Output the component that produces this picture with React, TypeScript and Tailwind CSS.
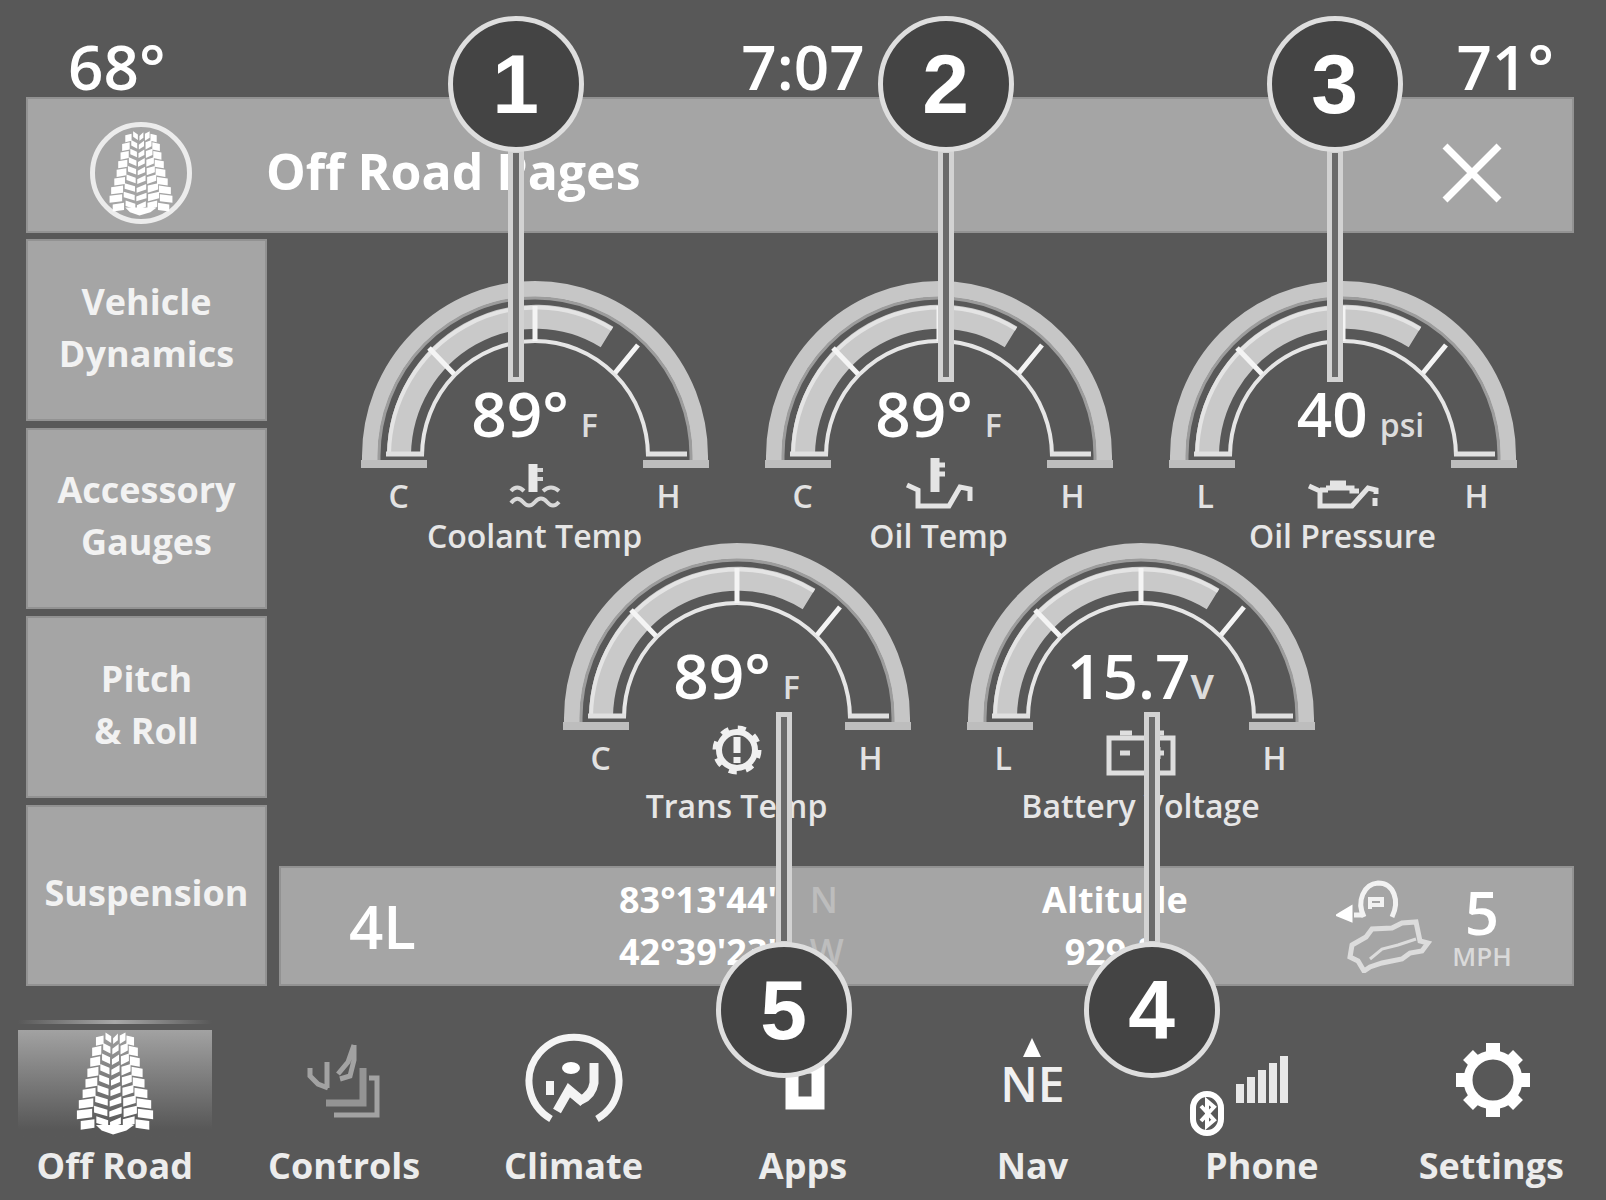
import type { ReactNode } from 'react';

type GaugeProps = {
  name: string;
  low: string;
  value: string;
  unit: string;
  icon: ReactNode;
  valueClass?: string;
  unitClass?: string;
  children?: ReactNode;
};

// Rows of tread blocks, widening towards the bottom
const treadRows = [
  { y: 0, w: 40 },
  { y: 11, w: 48 },
  { y: 22, w: 52 },
  { y: 33, w: 58 },
  { y: 44, w: 62 },
  { y: 55, w: 68 },
  { y: 66, w: 76 },
  { y: 77, w: 80 },
  { y: 88, w: 72 },
];

const TreadIcon = ({ className }: { className: string }) => (
  <svg viewBox="0 0 84 108" className={className} fill="#fff" aria-hidden="true">
    {treadRows.map(({ y, w }) => {
      const left = 42 - w / 2;
      const s = w / 5;
      return (
        <g key={y}>
          <path d={`M${left} ${y + 6}l${s} -2v9l${-s} 2z`} />
          <path d={`M${left + s + 2} ${y + 1}l${s - 2} 4v7l${2 - s} -4z`} />
          <path d={`M${left + 2 * s + 2} ${y + 7}l${s - 3} -5v7l${3 - s} 4z`} />
          <path d={`M${left + 3 * s + 1} ${y + 4}l${s - 2} -3v8l${2 - s} 4z`} />
          <path d={`M${left + 4 * s} ${y + 4}l${s} 2v9l${-s} -2z`} />
        </g>
      );
    })}
    <path d="M22 98l40 0l-8 6l-14 4l-12 -4z" />
  </svg>
);

const Callout = ({ number, className, up }: { number: number; className: string; up?: boolean }) => (
  <div className={`absolute z-10 flex h-[362px] -translate-x-1/2 items-center ${up ? 'flex-col' : 'flex-col-reverse'} ${className}`}>
    <div className="-my-1 w-4 grow border-5 border-[#d2d2d2] bg-[#6a6a6a]" />
    <span className="z-10 flex size-[136px] items-center justify-center rounded-full border-5 border-[#dedede] bg-[#444] font-['Liberation_Sans',sans-serif] text-[84px] leading-none font-bold text-white">
      {number}
    </span>
  </div>
);

const Gauge = ({
  name,
  low,
  value,
  unit,
  icon,
  valueClass = 'gap-3',
  unitClass = 'text-[32px]',
  children,
}: GaugeProps) => (
  <section className="relative h-[262px] w-[348px]" aria-label={name}>
    <svg viewBox="0 0 348 188" className="h-[188px] w-full" fill="none" aria-hidden="true">
      <path d="M9 184V176A165 167 0 0 1 339 176V184" stroke="#c6c6c6" strokeWidth="16" />
      <path d="M18 182V176A156 158 0 0 1 330 176V182" stroke="#9c9c9c" strokeWidth="3" />
      <path d="M38 174A137 140 0 0 1 246 57" stroke="#c9c9c9" strokeWidth="24" />
      <path d="M28 174A147 149 0 0 1 251 49" stroke="#e4e4e4" strokeWidth="4" />
      <path d="M61 176A113 115 0 0 1 287 176" stroke="#e6e6e6" strokeWidth="4" />
      <path d="M174 26V61M68 68L93 94M254 93L277 65" stroke="#f4f4f4" strokeWidth="5" />
      <path d="M25 174H63M285 174H326" stroke="#e0e0e0" strokeWidth="5" />
      <path d="M0 184H66M282 184H348" stroke="#bdbdbd" strokeWidth="8" />
    </svg>
    <div className={`absolute inset-x-0 top-[97px] flex items-baseline justify-center text-white ${valueClass}`}>
      <span className="text-[62px] leading-[72px] font-semibold">{value}</span>
      <span className={`font-semibold text-[#dcdcdc] ${unitClass}`}>{unit}</span>
    </div>
    <div className="flex items-start justify-between px-7 text-[32px] leading-[56px] font-semibold text-[#e2e2e2]">
      <span>{low}</span>
      <span>H</span>
    </div>
    <div className="absolute inset-x-0 top-[174px] flex h-[60px] items-end justify-center">{icon}</div>
    <h2 className="-mt-2 text-center text-[32px] leading-[40px] font-semibold whitespace-nowrap text-[#e6e6e6]">{name}</h2>
    {children}
  </section>
);

const CoolantIcon = () => (
  <svg viewBox="0 0 56 48" className="mb-1 h-12 w-14" fill="none" stroke="#d8d8d8" strokeWidth="4" aria-hidden="true">
    <path d="M26 2V30" strokeWidth="9" stroke="#e8e8e8" />
    <path d="M30 8H36M30 17H36" />
    <path d="M4 29Q10 22 17 29M36 29Q44 22 52 29M4 41Q10 33 16 40T28 40T40 40T52 40" />
  </svg>
);

const OilTempIcon = () => (
  <svg viewBox="0 0 70 54" className="mb-1 h-[54px] w-[70px]" fill="none" stroke="#e4e4e4" strokeWidth="5" aria-hidden="true">
    <path d="M31 2V36" strokeWidth="9" />
    <path d="M35 9H41M35 18H41" />
    <path d="M3 29L14 34V50H45L56 31L66 33V45" />
  </svg>
);

const OilCanIcon = () => (
  <svg viewBox="0 0 74 30" className="mb-1 h-[30px] w-[74px]" fill="none" stroke="#e4e4e4" strokeWidth="5" aria-hidden="true">
    <path d="M3 6L14 11V26H46L62 8L70 10V14" />
    <path d="M14 10H22M20 8H46V11H53M32 8V2M24 3H40" />
    <path d="M69 18V26" />
  </svg>
);

const TransIcon = () => (
  <svg viewBox="0 0 52 52" className="size-[52px]" fill="none" stroke="#f0f0f0" aria-hidden="true">
    <circle cx="26" cy="26" r="18" strokeWidth="6" />
    <circle cx="26" cy="26" r="22" strokeWidth="5" strokeDasharray="8 9.3" />
    <path d="M26 13V29M26 33V39" strokeWidth="7" />
  </svg>
);

const BatteryIcon = () => (
  <svg viewBox="0 0 70 46" className="h-[46px] w-[70px]" fill="none" stroke="#dedede" strokeWidth="5" aria-hidden="true">
    <path d="M3 8H67V43H3Z" />
    <path d="M14 3H26M46 3H58M14 23H24M46 23H58M52 17V29" />
  </svg>
);

const HillDescentIcon = () => (
  <svg viewBox="0 0 96 94" className="h-[94px] w-[96px]" fill="none" stroke="#dcdcdc" strokeWidth="5" aria-hidden="true">
    <path d="M4 36L14 30V40Z" fill="#fff" stroke="#fff" />
    <path d="M18 36H26M28 38C20 22 28 5 42 4C58 4 64 22 56 38" stroke="#f2f2f2" />
    <path d="M34 30V20H46V26H36" stroke="#f2f2f2" strokeWidth="4" />
    <path d="M16 66L30 58L36 50L56 49L66 44L80 43L84 62L92 64L86 72L74 74L66 80L46 84L34 88L28 92L22 82L14 78Z" />
    <path d="M34 80L46 70L62 66L80 60" strokeWidth="3" />
  </svg>
);

const ControlsIcon = () => (
  <svg viewBox="0 0 80 76" className="h-[76px] w-20" fill="none" stroke="#a2a2a2" strokeWidth="5" aria-hidden="true">
    <path d="M50 3L44 20L34 32M50 3V18L46 34L36 37" />
    <path d="M23 20V46M6 26V34L14 42L24 46" />
    <path d="M22 61H59V26" strokeWidth="7" stroke="#949494" />
    <path d="M30 73H73V36H65" />
  </svg>
);

const ClimateIcon = () => (
  <svg viewBox="0 0 98 94" className="h-[94px] w-[98px]" fill="none" stroke="#f4f4f4" strokeWidth="7" aria-hidden="true">
    <path d="M26 86A45 44 0 1 1 72 86" />
    <ellipse cx="46" cy="35" rx="9" ry="6" fill="#fff" stroke="none" />
    <path d="M69 30V50Q67 62 56 67L44 57L32 78" strokeWidth="9" />
    <path d="M25 48V62M46 60L58 70" strokeWidth="8" />
  </svg>
);

const AppsIcon = () => (
  <svg viewBox="0 0 50 78" className="mb-4 h-[78px] w-[50px]" fill="none" stroke="#fff" strokeWidth="13" aria-hidden="true">
    <path d="M40 6V70H14V34H40" />
  </svg>
);

const PhoneIcon = () => (
  <svg viewBox="0 0 110 86" className="mt-8 mr-9 h-[86px] w-[110px]" fill="none" stroke="#e8e8e8" aria-hidden="true">
    <path d="M51 50V31M62 50V24M73 50V17M84 50V10M95 50V3" strokeWidth="8" />
    <rect x="4" y="41" width="28" height="39" rx="14" stroke="#fff" strokeWidth="6" />
    <path d="M12 53L25 67L18 73V48L25 54L12 68" stroke="#fff" strokeWidth="4" />
  </svg>
);

const GearIcon = () => (
  <svg viewBox="0 0 80 78" className="ml-1 h-[78px] w-20" fill="none" stroke="#fff" aria-hidden="true">
    <circle cx="40" cy="39" r="25" strokeWidth="9" />
    <path
      d="M40 2V12M40 66V76M3 39H12M68 39H77M15 14L21 20M59 58L65 64M65 14L59 20M21 58L15 64"
      strokeWidth="14"
    />
  </svg>
);

const tabs = [['Vehicle', 'Dynamics'], ['Accessory', 'Gauges'], ['Pitch', '& Roll'], ['Suspension']];

const apps = [
  { label: 'Off Road', icon: <TreadIcon className="mb-1 h-[104px] w-20" /> },
  { label: 'Controls', icon: <ControlsIcon /> },
  { label: 'Climate', icon: <ClimateIcon /> },
  { label: 'Apps', icon: <AppsIcon /> },
  {
    label: 'Nav',
    icon: (
      <span className="mb-3 flex flex-col items-center text-[48px] leading-[52px] font-semibold text-[#f0f0f0]">
        <svg viewBox="0 0 20 20" className="size-5" fill="#fff" aria-hidden="true">
          <path d="M10 0L19 19H1Z" />
        </svg>
        NE
      </span>
    ),
  },
  { label: 'Phone', icon: <PhoneIcon /> },
  { label: 'Settings', icon: <GearIcon /> },
];

export default function App() {
  return (
    <div className="min-h-[1200px] overflow-hidden bg-[#585858] font-['Open_Sans','Noto_Sans',sans-serif] text-white">
      <div className="grid h-[97px] grid-cols-3 items-end px-[52px] text-[62px] leading-[62px] font-semibold">
        <span className="pl-4">68°</span>
        <time className="text-center">7:07</time>
        <span className="text-right">71°</span>
      </div>

      <header className="mr-8 ml-[26px] flex h-[136px] items-center border-2 border-[#929292] bg-[#a5a5a5] pt-4 pr-[70px] pl-[62px]">
        <span className="flex size-[102px] items-center justify-center rounded-full border-5 border-[#ececec]">
          <TreadIcon className="h-[86px] w-[66px]" />
        </span>
        <h1 className="grow pb-1 pl-[74px] text-[50px] leading-[60px] font-bold">Off Road Pages</h1>
        <button type="button" aria-label="Close">
          <svg viewBox="0 0 60 60" className="size-[60px]" fill="none" stroke="#fff" strokeWidth="7" aria-hidden="true">
            <path d="M3 3L57 57M57 3L3 57" />
          </svg>
        </button>
      </header>

      <div className="mr-8 ml-[26px] flex h-[753px] gap-3 pt-[6px]">
        <nav className="flex w-[241px] shrink-0 flex-col gap-[7px]">
          {tabs.map((lines) => (
            <button
              key={lines[0]}
              type="button"
              className="flex-1 border-2 border-[#929292] bg-[#a5a5a5] pb-1 text-[36px] leading-[52px] font-bold text-[#f2f2f2]"
            >
              {lines.map((line) => (
                <span key={line} className="block">
                  {line}
                </span>
              ))}
            </button>
          ))}
        </nav>

        <div className="flex min-w-0 grow flex-col justify-between">
          <main className="pt-[41px] pl-6">
            <div className="flex justify-center gap-14">
              <Gauge name="Coolant Temp" low="C" value="89°" unit="F" icon={<CoolantIcon />}>
                <Callout number={1} className="-top-[264px] left-[155px]" />
              </Gauge>
              <Gauge name="Oil Temp" low="C" value="89°" unit="F" icon={<OilTempIcon />}>
                <Callout number={2} className="-top-[264px] left-[181px]" />
              </Gauge>
              <Gauge name="Oil Pressure" low="L" value="40" unit="psi" valueClass="gap-3 pl-9" icon={<OilCanIcon />}>
                <Callout number={3} className="-top-[264px] left-[166px]" />
              </Gauge>
            </div>
            <div className="flex justify-center gap-14 [&_h2]:mt-0">
              <Gauge name="Trans Temp" low="C" value="89°" unit="F" icon={<TransIcon />}>
                <Callout number={5} up className="top-[174px] left-[221px]" />
              </Gauge>
              <Gauge
                name="Battery Voltage"
                low="L"
                value="15.7"
                unit="v"
                valueClass="gap-0"
                unitClass="text-[44px]"
                icon={<BatteryIcon />}
              >
                <Callout number={4} up className="top-[174px] left-[185px]" />
              </Gauge>
            </div>
          </main>

          <footer className="flex h-[120px] items-center border-2 border-[#929292] bg-[#a5a5a5] font-semibold">
            <span className="w-[338px] pl-[68px] text-[60px]">4L</span>
            <p className="w-[376px] text-[36px] leading-[52px] font-bold whitespace-nowrap">
              83°13'44" <span className="ml-4 font-semibold text-[#bdbdbd]">N</span>
              <br />
              42°39'23" <span className="ml-4 font-semibold text-[#bdbdbd]">W</span>
            </p>
            <p className="w-[240px] text-center text-[36px] leading-[52px] font-bold">
              Altitude
              <br />
              929 ft
            </p>
            <div className="ml-auto pr-5">
              <HillDescentIcon />
            </div>
            <p className="mr-[60px] flex w-[60px] flex-col items-center">
              <span className="text-[60px] leading-[60px]">5</span>
              <span className="text-[26px] leading-[28px] text-[#dadada]">MPH</span>
            </p>
          </footer>
        </div>
      </div>

      <nav className="mt-[34px] grid grid-cols-7">
        {apps.map(({ label, icon }, i) => (
          <a key={label} href={`#${label}`} className="flex flex-col items-center">
            {i === 0 ? (
              <span className="flex h-[120px] w-[194px] flex-col gap-[6px]">
                <span className="h-1 bg-linear-to-r from-transparent via-[#a8a8a8] to-transparent" />
                <span className="flex grow items-center justify-center bg-linear-to-b from-[#a2a2a2] to-[#585858] to-90%">
                  {icon}
                </span>
              </span>
            ) : (
              <span className="flex h-[120px] w-[194px] items-center justify-center">{icon}</span>
            )}
            <span className="text-[36px] leading-[52px] font-bold text-[#ececec]">{label}</span>
          </a>
        ))}
      </nav>
    </div>
  );
}
